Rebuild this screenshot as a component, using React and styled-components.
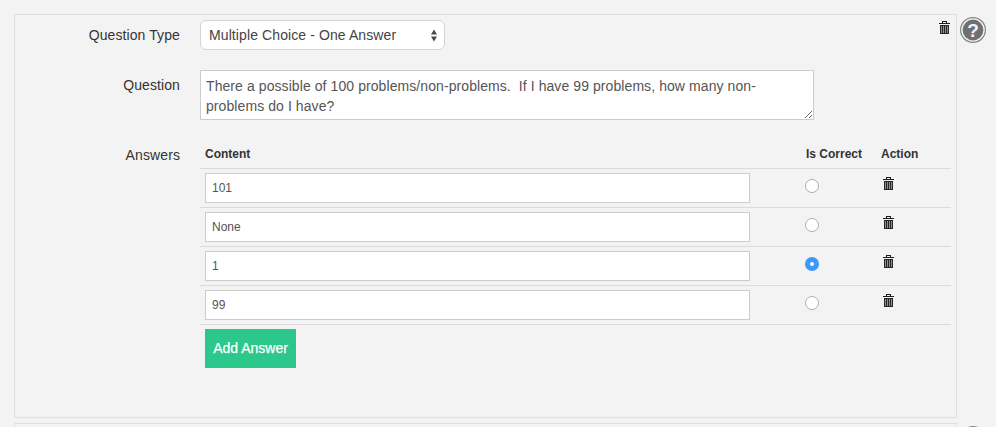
import React from "react";
import styled, { createGlobalStyle } from "styled-components";

const Global = createGlobalStyle`
  html, body { margin: 0; padding: 0; height: 427px; overflow: hidden; background: #f3f3f3; }
  body { font-family: "Liberation Sans", Arial, sans-serif; color: #333; }
  * { box-sizing: border-box; }
`;

const Page = styled.div`
  display: flex;
  flex-direction: column;
  gap: 5px;
  padding: 14px 0 0 14px;
  width: 996px;
  height: 427px;
  overflow: hidden;
`;
const PanelRow = styled.div`
  display: flex;
  align-items: flex-start;
  gap: 3px;
  flex: none;
`;
const Panel = styled.section`
  position: relative;
  width: 943px;
  height: ${p => p.$height}px;
  border: 1px solid #dfdfdf;
  flex: none;
`;
const Body = styled.div`
  display: flex;
  flex-direction: column;
  padding-top: 5px;
`;
const FormRow = styled.div`
  display: grid;
  grid-template-columns: 165px 1fr;
  column-gap: 20px;
  margin-bottom: ${p => p.$gap}px;
`;
const Label = styled.label`
  font-size: 14px;
  line-height: 20px;
  letter-spacing: 0.1px;
  text-align: right;
  color: #333;
  padding-top: 5px;
`;
const SelectBox = styled.div`
  width: 245px;
  height: 30px;
  display: flex;
  align-items: center;
  justify-content: space-between;
  padding: 0 7px 0 8px;
  background: #fff;
  border: 1px solid #d3d3d3;
  border-radius: 6px;
  font-size: 14px;
  letter-spacing: 0.1px;
  color: #444;
`;
const QuestionArea = styled.textarea`
  display: block;
  width: 614px;
  height: 50px;
  padding: 5px 5px;
  border: 1px solid #ccc;
  border-radius: 0;
  background: #fff;
  font: 14px/20px "Liberation Sans", Arial, sans-serif;
  letter-spacing: 0.08px;
  color: #555;
  resize: vertical;
  outline: none;
`;
const Table = styled.div`
  width: 751px;
  display: flex;
  flex-direction: column;
`;
const TableHead = styled.div`
  display: grid;
  grid-template-columns: 590px 76px 1fr;
  height: 29px;
  border-bottom: 1px solid #dcdcdc;
`;
const HeadCell = styled.div`
  font-size: 12px;
  font-weight: bold;
  line-height: 17px;
  padding: 6px 0 0 ${p => p.$left || 0}px;
  color: #333;
`;
const Row = styled.div`
  display: grid;
  grid-template-columns: 590px 76px 1fr;
  height: 39px;
  border-bottom: 1px solid #dcdcdc;
`;
const InputCell = styled.div`
  padding: 4px 0 0 5px;
`;
const AnswerInput = styled.input`
  display: block;
  width: 545px;
  height: 30px;
  padding: 0 6px;
  border: 1px solid #ccc;
  border-radius: 0;
  background: #fff;
  font: 12px "Liberation Sans", Arial, sans-serif;
  color: #555;
  outline: none;
`;
const RadioCell = styled.div`
  padding: 10px 0 0 15px;
`;
const Radio = styled.span`
  display: flex;
  align-items: center;
  justify-content: center;
  width: 14px;
  height: 14px;
  border-radius: 50%;
  background: ${p => (p.$on ? "#3b99fc" : "#fff")};
  border: ${p => (p.$on ? "none" : "1px solid #adadad")};
  &::after {
    content: "";
    display: ${p => (p.$on ? "block" : "none")};
    width: 4px;
    height: 4px;
    border-radius: 50%;
    background: #fff;
  }
`;
const ActionCell = styled.div`
  padding: 8px 0 0 17px;
  line-height: 0;
`;
const AddButton = styled.button`
  display: block;
  margin: 4px 0 0 5px;
  width: 91px;
  height: 39px;
  padding: 0 0 2px;
  border: none;
  border-radius: 0;
  background: #2bc78b;
  color: #fff;
  font: 14px "Liberation Sans", Arial, sans-serif;
  -webkit-text-stroke: 0.25px #fff;
`;
const PanelTrash = styled.span`
  position: absolute;
  top: 6px;
  right: 6px;
  line-height: 0;
`;
const HelpButton = styled.span`
  flex: none;
  display: block;
  margin-top: 3px;
  line-height: 0;
`;

const Trash = () => (
  <svg width="11" height="13" viewBox="0 0 11 13" shapeRendering="crispEdges">
    <path d="M0 2.5h11" stroke="#1c1c1c" strokeWidth="1" fill="none" />
    <path d="M3 0.5h5M3.5 0v2M7.5 0v2" stroke="#1c1c1c" strokeWidth="1" fill="none" />
    <rect x="1" y="4" width="9" height="9" fill="#262626" />
    <path d="M2.5 5v7M4.5 5v7M6.5 5v7M8.5 5v7" stroke="#8f8f8f" strokeWidth="1" />
  </svg>
);

const UpDown = () => (
  <svg width="6" height="13" viewBox="0 0 6 13">
    <path d="M3 0.5 6 5.5H0zM3 12.5 0 7.5h6z" fill="#4a4a4a" />
  </svg>
);

const Help = ({ mark = true }) => (
  <svg width="26" height="26" viewBox="0 0 26 26">
    <circle cx="13" cy="13" r="12.4" fill="#f3f3f3" stroke="#858585" strokeWidth="1.2" />
    <circle cx="13" cy="13" r="10.4" fill="#707070" />
    {mark && (
      <text x="13" y="20" textAnchor="middle" fontFamily="Liberation Sans, Arial, sans-serif" fontWeight="bold" fontSize="19" fill="#f3f3f3">?</text>
    )}
  </svg>
);

const answers = [
  { value: "101", on: false },
  { value: "None", on: false },
  { value: "1", on: true },
  { value: "99", on: false },
];

export default function App() {
  return (
    <Page>
      <Global />
      <PanelRow>
        <Panel $height={404}>
          <PanelTrash><Trash /></PanelTrash>
          <Body>
            <FormRow $gap={20}>
              <Label>Question Type</Label>
              <SelectBox>
                <span>Multiple Choice - One Answer</span>
                <UpDown />
              </SelectBox>
            </FormRow>
            <FormRow $gap={20}>
              <Label>Question</Label>
              <QuestionArea
                readOnly
                value={"There a possible of 100 problems/non-problems.  If I have 99 problems, how many non-problems do I have?"}
              />
            </FormRow>
            <FormRow $gap={0}>
              <Label>Answers</Label>
              <Table>
                <TableHead>
                  <HeadCell $left={5}>Content</HeadCell>
                  <HeadCell $left={16}>Is Correct</HeadCell>
                  <HeadCell $left={15}>Action</HeadCell>
                </TableHead>
                {answers.map(a => (
                  <Row key={a.value}>
                    <InputCell><AnswerInput readOnly value={a.value} /></InputCell>
                    <RadioCell><Radio $on={a.on} /></RadioCell>
                    <ActionCell><Trash /></ActionCell>
                  </Row>
                ))}
                <AddButton>Add Answer</AddButton>
              </Table>
            </FormRow>
          </Body>
        </Panel>
        <HelpButton><Help /></HelpButton>
      </PanelRow>
      <PanelRow>
        <Panel $height={40} />
        <HelpButton><Help mark={false} /></HelpButton>
      </PanelRow>
    </Page>
  );
}
